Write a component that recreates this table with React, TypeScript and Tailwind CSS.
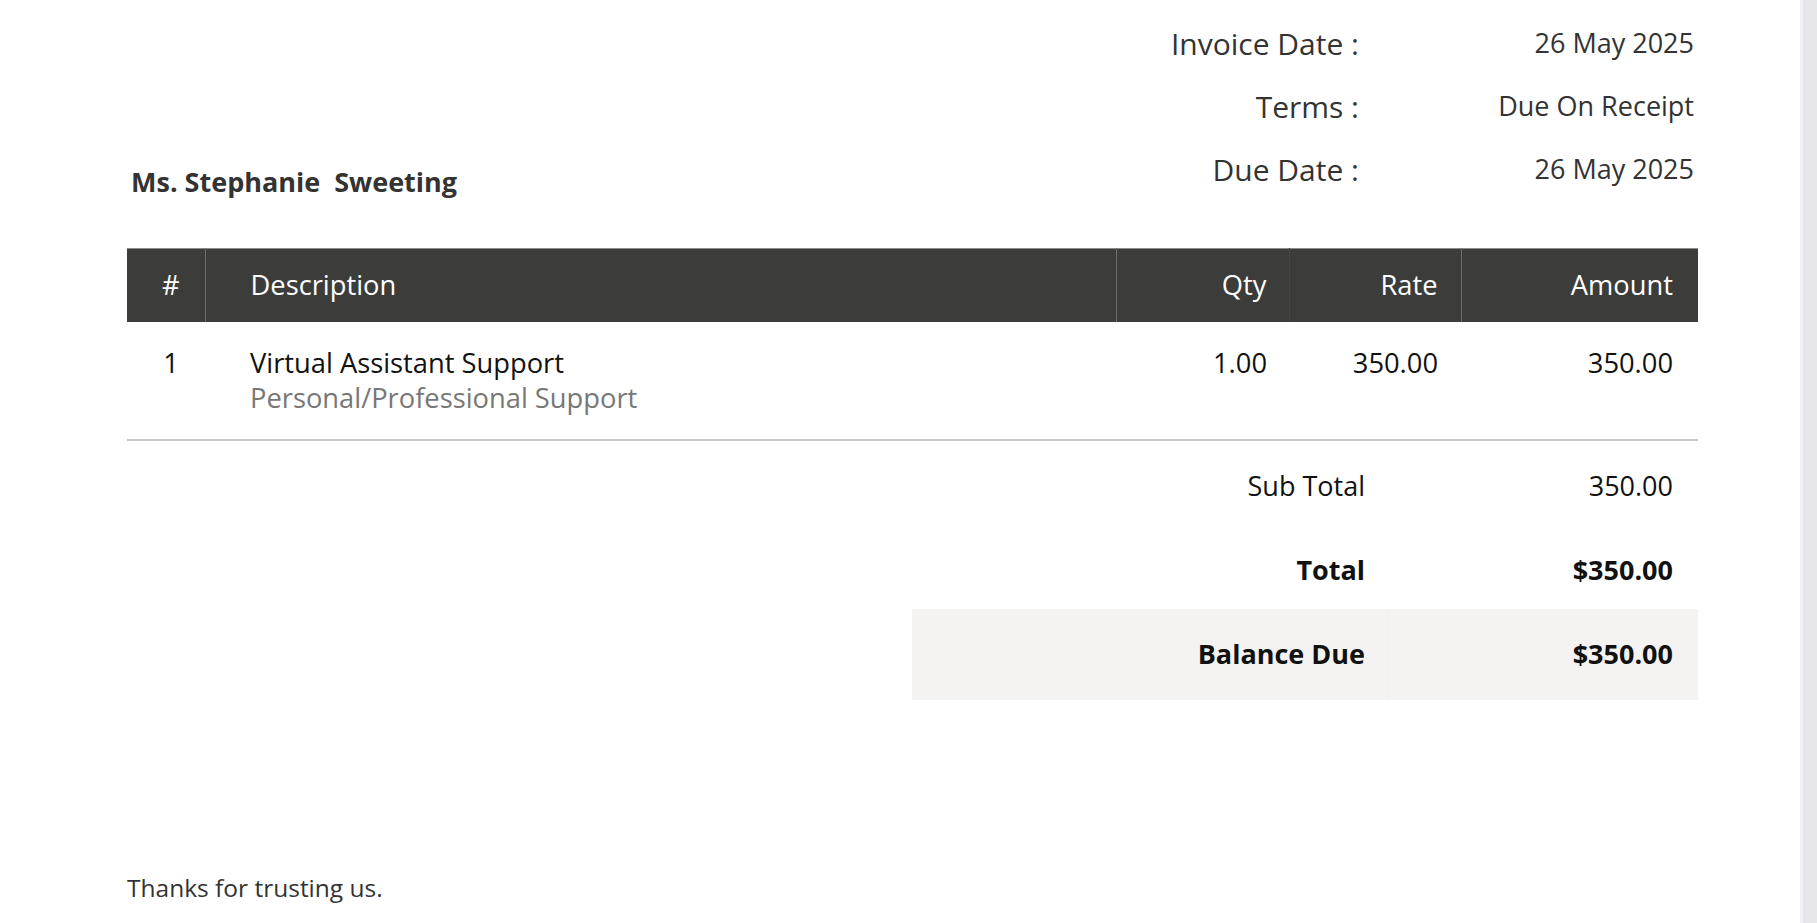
const items = [
  {
    no: 1,
    title: "Virtual Assistant Support",
    note: "Personal/Professional Support",
    qty: "1.00",
    rate: "350.00",
    amount: "350.00",
  },
];

function MetaRow({ label, value }: { label: string; value: string }) {
  return (
    <div className="flex h-[63px] items-center">
      <div className="w-[300px] text-right text-[30px]">{label}</div>
      <div className="w-[335px] text-right text-[27px]">{value}</div>
    </div>
  );
}

export default function App() {
  return (
    <div className="flex min-h-[923px] w-full bg-white font-['Open_Sans',sans-serif]">
      <main className="flex-1 pr-[102px] pl-[127px]">
        <div className="flex items-start justify-between pt-[12px]">
          <div className="pt-[152px] pl-1 text-[27px] leading-[36px] font-bold text-[#333]">
            Ms. Stephanie&nbsp; Sweeting
          </div>
          <div className="mr-[4px] text-[#333]">
            <MetaRow label="Invoice Date :" value="26 May 2025" />
            <MetaRow label="Terms :" value="Due On Receipt" />
            <MetaRow label="Due Date :" value="26 May 2025" />
          </div>
        </div>

        <table className="mt-[47px] w-full border-collapse text-[27.3px]">
          <thead>
            <tr className="h-[73px] border-t border-[#8a8a8a] bg-[#3c3c3b] text-white">
              <th className="w-[78px] border-r border-[#6e6e6e] pl-[10px] text-center font-normal">#</th>
              <th className="border-r border-[#6e6e6e] pl-[45px] text-left font-normal">Description</th>
              <th className="w-[173px] border-r border-[#454544] pr-[22px] text-right font-normal">Qty</th>
              <th className="w-[172px] border-r border-[#6e6e6e] pr-[23px] text-right font-normal">Rate</th>
              <th className="w-[237px] pr-[25px] text-right font-normal">Amount</th>
            </tr>
          </thead>
          <tbody>
            {items.map((it) => (
              <tr key={it.no} className="border-b-2 border-[#c8c8c8] align-top text-[#111]">
                <td className="pt-[24px] pl-[10px] text-center leading-[33px]">{it.no}</td>
                <td className="pt-[24px] pb-[22px] pl-[45px]">
                  <div className="leading-[33px]">{it.title}</div>
                  <div className="leading-[38px] text-[#777]">{it.note}</div>
                </td>
                <td className="pt-[24px] pr-[22px] text-right leading-[33px]">{it.qty}</td>
                <td className="pt-[24px] pr-[23px] text-right leading-[33px]">{it.rate}</td>
                <td className="pt-[24px] pr-[25px] text-right leading-[33px]">{it.amount}</td>
              </tr>
            ))}
          </tbody>
        </table>

        <div className="ml-auto w-[786px] text-[27px] text-[#111]">
          <div className="flex h-[91px] items-center">
            <div className="w-[453px] text-right">Sub Total</div>
            <div className="flex-1 pr-[25px] text-right">350.00</div>
          </div>
          <div className="flex h-[77px] items-center font-bold">
            <div className="w-[453px] text-right">Total</div>
            <div className="flex-1 pr-[25px] text-right">$350.00</div>
          </div>
          <div className="flex h-[91px] items-center bg-[#f4f3f2] font-bold">
            <div className="w-[453px] text-right">Balance Due</div>
            <div className="ml-[23px] flex h-full flex-1 items-center justify-end border-l border-[#f0efee] pr-[25px]">
              $350.00
            </div>
          </div>
        </div>

        <p className="mt-[170px] text-[24.5px] text-[#333]">Thanks for trusting us.</p>
      </main>
      <div className="w-[17px] shrink-0 border-l-[3px] border-[#f1f1f3] bg-[#e6e6ea]" />
    </div>
  );
}
